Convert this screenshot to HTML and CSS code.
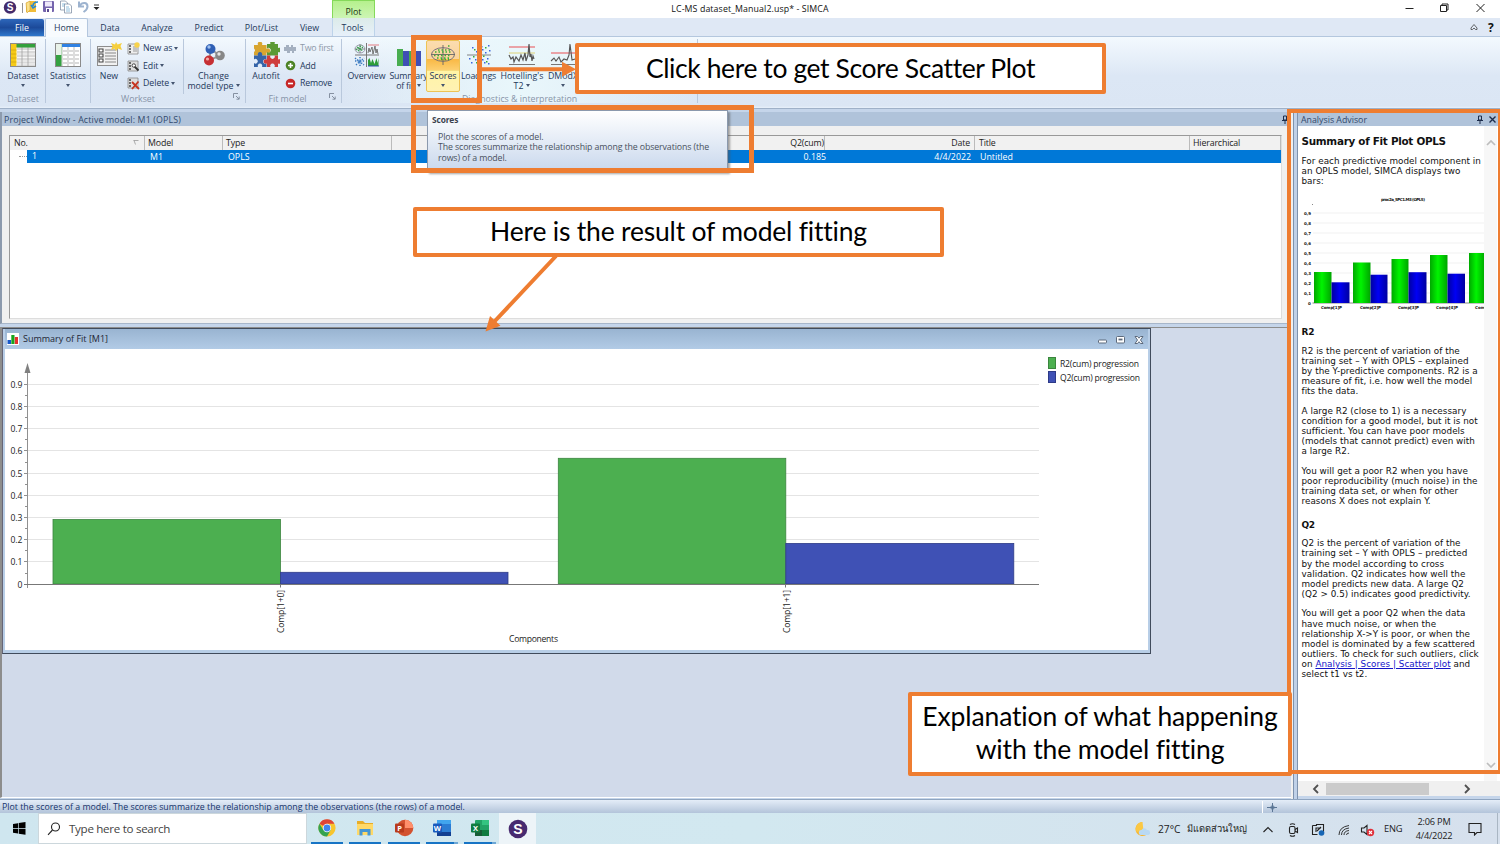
FILE: index.html
```
<!DOCTYPE html>
<html lang="en">
<head>
<meta charset="utf-8">
<title>LC-MS dataset_Manual2.usp* - SIMCA</title>
<link rel="stylesheet" href="styles.css">
</head>
<body>
<header class="titlebar">
  <div class="quick">
    <svg width="104" height="18" viewBox="0 0 104 18">
      <circle cx="10" cy="7.500" r="6.200" fill="#432a6b"/>
      <text x="10" y="11.100" class="s-logo" text-anchor="middle">S</text>
      <path d="M22.500 3v10" stroke="#777" stroke-width=".8"/>
      <path d="M26 3l4-2h6v11H26z" fill="#f1bd3a"/><path d="M26 3l4-2v9l-3 3z" fill="#fbe28c" stroke="#c99525" stroke-width=".5"/>
      <path d="M38 2c-3 0-5 1-5 4M31 5l2 3 3-2" fill="none" stroke="#2389d2" stroke-width="1.600"/>
      <rect x="43" y="1" width="11" height="11" rx="1" fill="#7564ad"/><rect x="45" y="1.500" width="7" height="5" fill="#eee8fa"/><rect x="46" y="8" width="6" height="4" fill="#fff"/><rect x="47" y="9" width="2" height="3" fill="#594890"/>
      <g fill="#fff" stroke="#73849b" stroke-width=".7"><path d="M60.500 1h5l2 2v7h-7z"/><path d="M64.500 4h5l2 2v7h-7z"/></g><path d="M62 4h3M62 6h2M66 7h3M66 9h4M66 11h4" stroke="#62a3cf" stroke-width=".7"/>
      <path d="M79 1.500v5h5M79.500 6C82 2 87.500 2 87.500 6.500c0 3-2 4-4 5.500" fill="none" stroke="#9db3cf" stroke-width="2"/>
      <path d="M94 5h5" stroke="#222" stroke-width=".9"/><path d="M93.500 7h6l-3 3z" fill="#222"/>
    </svg>
  </div>
  <div class="context-tab">Plot</div>
  <div class="window-title">LC-MS dataset_Manual2.usp* - SIMCA</div>
  <svg class="winctl" width="90" height="18" viewBox="1400 0 90 18" fill="none" stroke="#222" stroke-width="1">
    <path d="M1405.500 8.500h8M1440.500 5.500h6v6h-6zM1442 5.500v-1.500h6v6h-1.500M1476.500 4l8 8M1484.500 4l-8 8"/>
  </svg>
</header>

<nav class="tabs">
  <span class="tab file">File</span><span class="tab home">Home</span><span class="tab t-data">Data</span><span class="tab t-ana">Analyze</span><span class="tab t-pre">Predict</span><span class="tab t-plot">Plot/List</span><span class="tab t-view">View</span><span class="tab tools">Tools</span>
  <span class="tab-right"><svg width="8" height="8" viewBox="0 0 8 8" fill="none" stroke="#444" stroke-width=".8"><path d="M1 5l3-3.500L7 5v1.500H5.500L4 5 2.500 6.500H1z"/></svg><b>?</b></span>
</nav>

<section class="ribbon">
  <div class="group g-dataset">
    <div class="items">
      <div class="btn w46">
        <svg width="26" height="26" viewBox="0 0 26 26"><rect x=".5" y="1.500" width="25" height="23" fill="#fff" stroke="#8b8b8b"/><path d="M7 5h18v19H7z" fill="#d9d9d9"/><path d="M1 8.500h24M1 12h24M1 15.500h24M1 19h24M1 22h24" stroke="#fff" stroke-width=".8"/><path d="M12 5v19M18 5v19" stroke="#999" stroke-width=".7"/><rect x="1" y="2" width="24" height="3.500" fill="#32a03c"/><rect x="1" y="2" width="5.500" height="22" fill="#f5ca18"/><path d="M1 8h5.500M1 12h5.500M1 16h5.500M1 20h5.500" stroke="#c69b0a" stroke-width=".6"/></svg>
        <span>Dataset</span><i class="caret"></i>
      </div>
    </div>
    <div class="cap">Dataset</div>
  </div>
  <div class="group g-stat">
    <div class="items">
      <div class="btn w45">
        <svg width="26" height="26" viewBox="0 0 26 26"><rect x=".5" y="1.500" width="25" height="23" fill="#fff" stroke="#8b8b8b"/><path d="M7 5v19M13 5v19M19 5v19" stroke="#aaa" stroke-width=".8"/><path d="M8 9h4M8 13h4M8 17h4M8 21h4M14 9h4M14 13h4M14 17h4M14 21h4M20 9h4M20 13h4M20 17h4M20 21h4" stroke="#b5b5b5"/><rect x="7" y="2" width="18" height="3" fill="#3081e3"/><rect x="1" y="2" width="5.500" height="22" fill="#34a141"/><path d="M1 2h5.500v11H1z" fill="#e9f2e9"/></svg>
        <span>Statistics</span><i class="caret"></i>
      </div>
    </div>
    <div class="cap"></div>
  </div>
  <div class="group g-work">
    <div class="items">
      <div class="btn w36">
        <svg width="26" height="26" viewBox="0 0 26 26"><rect x="1.500" y="4.500" width="20" height="19" fill="#f1f1f1" stroke="#8d8d8d"/><path d="M3 7h4v3H3zM3 12h4v3H3zM3 17h4v3H3z" fill="#fff" stroke="#444" stroke-width="1.100"/><path d="M9 8h11M9 11h11M9 14h11M9 17h11M9 20h11" stroke="#aaa" stroke-width="1.400"/><path d="M15 1l4 1.500L20 0l1.500 2.500L26 1l-1.500 3L26 8l-4-1.500L20 9l-1.500-2.500L15 8l1.500-4z" fill="#f6cf3d"/></svg>
        <span>New</span>
      </div>
      <div class="stack">
        <div class="row"><svg width="13" height="13" viewBox="0 0 13 13"><path d="M1 2h10v10H1z" fill="#eee" stroke="#888" stroke-width=".8"/><path d="M2 4h2M2 7h2M2 10h2" stroke="#444" stroke-width="1.500"/><path d="M6 5h4M6 7h4M6 9h4" stroke="#999"/><circle cx="10" cy="3" r="2.700" fill="#f7d24c"/></svg><span>New as</span><i class="caret"></i></div>
        <div class="row"><svg width="13" height="13" viewBox="0 0 13 13"><path d="M1 2h10v10H1z" fill="#ddd" stroke="#888" stroke-width=".8"/><path d="M2 4h2M2 7h2M2 10h2" stroke="#444" stroke-width="1.500"/><path d="M7 7l4.500 4.500" stroke="#333" stroke-width="1.800"/><circle cx="6.800" cy="6.500" r="1.700" fill="#fff" stroke="#444"/></svg><span>Edit</span><i class="caret"></i></div>
        <div class="row"><svg width="13" height="13" viewBox="0 0 13 13"><path d="M1 1h10v10H1z" fill="#ddd" stroke="#888" stroke-width=".8"/><path d="M2 3h2M2 6h2M2 9h2" stroke="#444" stroke-width="1.500"/><path d="M5 5l7 7M11.500 4.500L5 12" stroke="#c5321d" stroke-width="1.800"/></svg><span>Delete</span><i class="caret"></i></div>
      </div>
      <div class="btn w60 inner-sep">
        <svg width="26" height="26" viewBox="0 0 26 26"><path d="M10 7l9 7-11 4z" stroke="#999" stroke-width="2" fill="none"/><circle cx="9.500" cy="7" r="5" fill="#2f5fb5"/><circle cx="19" cy="13.500" r="4.800" fill="#878787"/><circle cx="8" cy="18.500" r="5" fill="#c62f33"/><circle cx="8" cy="5" r="1.700" fill="#9fc0ef"/><circle cx="18" cy="12" r="1.700" fill="#e5e5e5"/><circle cx="6.500" cy="17" r="1.600" fill="#f3aaa5"/></svg>
        <span>Change</span><span class="l2">model type<i class="caret"></i></span>
      </div>
    </div>
    <div class="cap cap-work">Workset</div>
    <svg class="launch" width="7" height="7" viewBox="0 0 7 7" fill="none" stroke="#7c8797" stroke-width=".9"><path d="M.5 5V.5H5M3 3l3 3M6.200 3.500v2.700H3.500"/></svg>
  </div>
  <div class="group g-fit">
    <div class="items">
      <div class="btn w40">
        <svg width="27" height="26" viewBox="0 0 27 26"><path d="M1 3h4a2.300 2.300 0 1 1 4 0h4.500v4a2.300 2.300 0 1 1 0 3.500v3H1V10a2.300 2.300 0 0 0 0-3.500z" fill="#d8a530"/><path d="M14 2h3.500a2.300 2.300 0 1 1 4 0H25v4a2.300 2.300 0 1 1 0 4v3.500H14V10a2.300 2.300 0 1 0 0-3.500z" fill="#5b9a35"/><path d="M1 13.500h4a2.300 2.300 0 1 1 4 0h4.500v4a2.300 2.300 0 1 0 0 4V25H9a2.300 2.300 0 1 0-4 0H1v-4a2.300 2.300 0 1 0 0-3.500z" fill="#3564a8"/><path d="M14 13.500h3.500a2.300 2.300 0 1 0 4 0H25v4a2.300 2.300 0 1 1 0 4V25h-3.500a2.300 2.300 0 1 0-4 0H14v-3.500a2.300 2.300 0 1 1 0-4z" fill="#cf3d3c"/></svg>
        <span>Autofit</span>
      </div>
      <div class="stack fit">
        <div class="row muted"><svg width="13" height="13" viewBox="0 0 13 13"><path d="M0 5h2V3h3v2h2V3h2v2h3v4h-2v2H8V9H6v2H3V9H0z" fill="#a4b0c0"/></svg><span>Two first</span></div>
        <div class="row"><svg width="11" height="11" viewBox="0 0 11 11"><circle cx="5.500" cy="5.500" r="4.800" fill="#4e8427"/><path d="M3 5.500h5M5.500 3v5" stroke="#fff" stroke-width="1.600"/></svg><span>Add</span></div>
        <div class="row"><svg width="11" height="11" viewBox="0 0 11 11"><circle cx="5.500" cy="5.500" r="4.800" fill="#c62828"/><path d="M3 5.500h5" stroke="#fff" stroke-width="1.600"/></svg><span>Remove</span></div>
      </div>
    </div>
    <div class="cap cap-fit">Fit model</div>
    <svg class="launch" width="7" height="7" viewBox="0 0 7 7" fill="none" stroke="#7c8797" stroke-width=".9"><path d="M.5 5V.5H5M3 3l3 3M6.200 3.500v2.700H3.500"/></svg>
  </div>
  <div class="group g-diag">
    <div class="items">
      <div class="btn w46b">
        <svg width="26" height="26" viewBox="0 0 26 26" fill="none"><path d="M12.500 1v24M1 13h24" stroke="#777"/><ellipse cx="6" cy="7" rx="5" ry="4" stroke="#778" stroke-width=".7"/><path d="M6 2v9M1 7h10" stroke="#666" stroke-width=".7"/><g stroke="#36a24a" stroke-width="1.300" stroke-dasharray="1.300 1.200"><path d="M3 5l6 4M4 9l5-4M2 8l6-5"/></g><path d="M14 3h11" stroke="#e37b80"/><path d="M14 11l1-5 1 4 2-5 1 7 2-8 1 7 1-4 1 5" stroke="#666" stroke-width=".9"/><g stroke="#3a7ac1" stroke-width="1.500" stroke-dasharray="1.300 1.300"><path d="M1 16l9 7M2 23l8-7M6 15v10M1 19h10"/></g><path d="M14 24v-6l1.500-2 1.500 5 1.500-4 2 5 2-6 1 5 1-5v8z" fill="#2d9d38"/><path d="M14 24h11" stroke="#334fb0"/></svg>
        <span>Overview</span>
      </div>
      <div class="btn w38 tight">
        <svg width="26" height="26" viewBox="0 0 26 26"><path d="M1 7h6v17H1zM13 9h6v15h-6z" fill="#48ad50"/><path d="M7 9h6v15H7zM19 9h6v15h-6z" fill="#3f4fb5"/></svg>
        <span>Summary</span><span class="l2">of fit<i class="caret"></i></span>
      </div>
      <div class="btn scores">
        <svg width="26" height="26" viewBox="0 0 26 26" fill="none"><ellipse cx="13" cy="12.500" rx="11.500" ry="6.800" stroke="#667" stroke-width=".9"/><path d="M13 3v20M1 12.500h24" stroke="#666" stroke-width=".9"/><g stroke="#3cae36" stroke-width="1.500" stroke-dasharray="1.500 2"><path d="M5 10h17M4 13.500h17M7 16h13M8 8h12M11 17.500h8M18 4h3"/></g></svg>
        <span>Scores</span><i class="caret"></i>
      </div>
      <div class="btn w38 tight">
        <svg width="26" height="26" viewBox="0 0 26 26" fill="none"><path d="M13 3v20M1 13h24" stroke="#777" stroke-width=".9"/><g fill="#3b66dd"><path d="M6 5h1.500v1.500H6zM10 9h1.500v1.500H10zM16 7h1.500v1.500H16zM22 3h1.500v1.500H22zM19 10h1.500v1.500H19zM3 16h1.500v1.500H3zM5 20h1.500v1.500H5zM9 17h1.500v1.500H9zM16 17h1.500v1.500H16zM21 16h1.500v1.500H21zM18 20h1.500v1.500H18zM22 21h1.500v1.500H22zM15 4h1.500v1.500H15zM23 8h1.500v1.500H23z"/></g><g fill="#36ac3b"><path d="M8 7h1.500v1.500H8zM11 6h1.500v1.500H11zM14 9h1.500v1.500H14zM17 13.500h1.500V15H17zM20 19h1.500v1.500H20zM7 14h1.500v1.500H7zM10 20h1.500v1.500H10zM19 5h1.500v1.500H19z"/></g></svg>
        <span>Loadings</span>
      </div>
      <div class="btn w49">
        <svg width="28" height="26" viewBox="0 0 28 26" fill="none"><path d="M1 5h26" stroke="#ea6a70" stroke-width="1.200"/><path d="M1 11h26" stroke="#dccd68" stroke-width=".9"/><path d="M1 13l2 4 2-2 1 5 2-5 3 4 2-6 2 5 2-7 1 8 2-6 1-11 1 13 1-3 1 7 1-5 1 3" stroke="#555" stroke-width="1.200"/><path d="M1 22.500h26" stroke="#777"/></svg>
        <span>Hotelling's</span><span class="l2">T2<i class="caret"></i></span>
      </div>
      <div class="btn w32">
        <svg width="26" height="26" viewBox="0 0 26 26" fill="none"><path d="M1 11h24" stroke="#ea6a70" stroke-width="1.200"/><path d="M1 19l3-3 2 3 3-4 2 5 3-3 3 1 2-5 1-11 2 16 3-1" stroke="#555" stroke-width="1.100"/><path d="M1 22.500h24" stroke="#777"/></svg>
        <span>DModX</span><i class="caret"></i>
      </div>
    </div>
    <div class="cap cap-diag">Diagnostics &amp; interpretation</div>
  </div>
</section>

<main class="workspace">
  <div class="left">
    <section class="project">
      <div class="pane-title"><span>Project Window - Active model: M1 (OPLS)</span><svg width="6" height="9" viewBox="0 0 6 9" fill="none" stroke="#1c2c4b"><path d="M1.500 1h3v4h-3zM0 5.500h6M3 5.500V9"/></svg></div>
      <div class="table">
        <div class="tr th"><span class="c1">No.<svg width="6" height="5" viewBox="0 0 6 5" fill="none" stroke="#999" stroke-width=".8"><path d="M.5.5h5M1 .5l1.500 4"/></svg></span><span class="c2">Model</span><span class="c3">Type</span><span class="c4">Q2(cum)</span><span class="c5">Date</span><span class="c6">Title</span><span class="c7">Hierarchical</span></div>
        <div class="tr sel"><span class="c1"><i class="dots"></i><b>1</b></span><span class="c2">M1</span><span class="c3">OPLS</span><span class="c4">0.185</span><span class="c5">4/4/2022</span><span class="c6">Untitled</span><span class="c7"></span></div>
      </div>
    </section>
    <section class="mdi">
      <div class="child">
        <div class="child-title">
          <svg width="12" height="12" viewBox="0 0 12 12"><path d="M0 0h12v12H0z" fill="#fff"/><path d="M.5 7H4v4H.5z" fill="#1757c9"/><path d="M4.300 2H7.500v9H4.300z" fill="#18a51e"/><path d="M7.800 4H11v7H7.800z" fill="#e33030"/></svg>
          <span>Summary of Fit [M1]</span>
          <svg class="child-ctl" width="46" height="10" viewBox="0 0 46 10" fill="#fff" stroke="#5d6a7c" stroke-width="1"><rect x=".5" y="5" width="8" height="3" rx=".8"/><rect x="18.500" y="1.500" width="8" height="6.500" rx="1"/><path d="M20.500 4.500h4" stroke-width="1.800"/><path d="M37 1.500h2.500L41 3.200l1.500-1.700H45L42.500 5 45 8.500h-2.500L41 6.700l-1.500 1.800H37L39.500 5z"/></svg>
        </div>
        <svg class="fit-chart" width="1143" height="301" viewBox="5 349 1143 301">
          <path d="M28 384.500H1039M28 406.500H1039M28 428.500H1039M28 450.500H1039M28 473.500H1039M28 495.500H1039M28 517.500H1039M28 539.500H1039M28 561.500H1039" stroke="#e4e4e4" fill="none"/>
          <path d="M27.500 372V588M24 384.500h4M24 406.500h4M24 428.500h4M24 450.500h4M24 473.500h4M24 495.500h4M24 517.500h4M24 539.500h4M24 561.500h4M25 395.500h2M25 417.500h2M25 439.500h2M25 462.500h2M25 484.500h2M25 506.500h2M25 528.500h2M25 550.500h2M25 573.500h2" stroke="#909090" fill="none"/>
          <path d="M27.500 363l3 10h-6z" fill="#808080"/>
          <rect x="53" y="519.500" width="227.500" height="64.500" fill="#4caf50" stroke="#3d8540" stroke-width=".8"/>
          <rect x="280.500" y="572.300" width="227.500" height="11.700" fill="#3f51b5" stroke="#2f3d88" stroke-width=".8"/>
          <rect x="558.300" y="458.300" width="227.500" height="125.700" fill="#4caf50" stroke="#3d8540" stroke-width=".8"/>
          <rect x="785.800" y="543.400" width="228" height="40.600" fill="#3f51b5" stroke="#2f3d88" stroke-width=".8"/>
          <path d="M24 584.500H1039M280.500 584v3.500M785.500 584v3.500" stroke="#777"/>
          <g class="axis" text-anchor="end"><text x="22.500" y="387.700">0.9</text><text x="22.500" y="409.900">0.8</text><text x="22.500" y="432.200">0.7</text><text x="22.500" y="454.300">0.6</text><text x="22.500" y="476.700">0.5</text><text x="22.500" y="498.900">0.4</text><text x="22.500" y="521">0.3</text><text x="22.500" y="543.200">0.2</text><text x="22.500" y="565.400">0.1</text><text x="22.500" y="587.700">0</text></g>
          <g class="axis"><text transform="translate(284 633) rotate(-90)" textLength="43">Comp[1+0]</text><text transform="translate(789.500 633) rotate(-90)" textLength="43">Comp[1+1]</text><text x="509" y="642" textLength="49">Components</text>
          <text x="1060" y="366.700" textLength="79">R2(cum) progression</text><text x="1060" y="381" textLength="80">Q2(cum) progression</text></g>
          <rect x="1048.500" y="357.500" width="7" height="11" fill="#4caf50" stroke="#3a853d"/><rect x="1048.500" y="371.500" width="7" height="11" fill="#3f51b5" stroke="#2d3a87"/>
        </svg>
      </div>
    </section>
  </div>
  <div class="splitter"></div>
  <aside class="advisor">
    <div class="pane-title"><span>Analysis Advisor</span><svg width="20" height="9" viewBox="0 0 20 9" fill="none" stroke="#1c2c4b"><path d="M2.500 1h3v4h-3zM1 5.500h6M4 5.500V9"/><path d="M13.500 1.500l6 6M19.500 1.500l-6 6" stroke-width="1.400"/></svg></div>
    <div class="advisor-body">
      <article>
        <h1>Summary of Fit Plot OPLS</h1>
        <p>For each predictive model component in<br>an OPLS model, SIMCA displays two<br>bars:</p>
        <svg class="mini" width="183" height="124" viewBox="1302 190 183 124">
          <defs><linearGradient id="g"><stop offset="0" stop-color="#00a800"/><stop offset=".45" stop-color="#00f400"/><stop offset="1" stop-color="#00a400"/></linearGradient><linearGradient id="b"><stop offset="0" stop-color="#0000a0"/><stop offset=".45" stop-color="#0000f4"/><stop offset="1" stop-color="#0000a0"/></linearGradient></defs>
          <path d="M1313 213h172M1313 223h172M1313 233h172M1313 243h172M1313 253h172M1313 263h172M1313 273h172M1313 283h172M1313 293h172" stroke="#eee" stroke-width=".8"/>
          <path d="M1312.500 204v1M1312.500 303h172" stroke="#888"/>
          <g fill="url(#g)"><path d="M1314 272h17.500v31H1314z"/><path d="M1353 262.500h17.500V303H1353z"/><path d="M1391.500 259h17v44h-17z"/><path d="M1430 255h17.500v48H1430z"/><path d="M1469 253h16v50h-16z"/></g>
          <g fill="url(#b)"><path d="M1331.500 282.300h18V303h-18z"/><path d="M1370.500 274.700h17V303h-17z"/><path d="M1408.500 272.200h18V303h-18z"/><path d="M1447.500 273.700h17.500V303h-17.500z"/></g>
          <g class="tiny"><text x="1381" y="201" textLength="44">proc2a_SPC1.M3 (OPLS)</text>
          <text x="1304" y="215">0,9</text><text x="1304" y="225">0,8</text><text x="1304" y="235">0,7</text><text x="1304" y="245">0,6</text><text x="1304" y="255">0,5</text><text x="1304" y="265">0,4</text><text x="1304" y="275">0,3</text><text x="1304" y="285">0,2</text><text x="1304" y="295">0,1</text><text x="1308" y="304.500">0</text>
          <text x="1321" y="309" textLength="21">Comp[1]P</text><text x="1360" y="309" textLength="21">Comp[2]P</text><text x="1398" y="309" textLength="21">Comp[3]P</text><text x="1436" y="309" textLength="22">Comp[4]P</text><text x="1475" y="309" textLength="10">Com</text></g>
        </svg>
        <h2>R2</h2>
        <p>R2 is the percent of variation of the<br>training set – Y with OPLS – explained<br>by the Y-predictive components. R2 is a<br>measure of fit, i.e. how well the model<br>fits the data.</p>
        <p>A large R2 (close to 1) is a necessary<br>condition for a good model, but it is not<br>sufficient. You can have poor models<br>(models that cannot predict) even with<br>a large R2.</p>
        <p>You will get a poor R2 when you have<br>poor reproducibility (much noise) in the<br>training data set, or when for other<br>reasons X does not explain Y.</p>
        <h2 class="q2">Q2</h2>
        <p>Q2 is the percent of variation of the<br>training set – Y with OPLS – predicted<br>by the model according to cross<br>validation. Q2 indicates how well the<br>model predicts new data. A large Q2<br>(Q2 &gt; 0.5) indicates good predictivity.</p>
        <p>You will get a poor Q2 when the data<br>have much noise, or when the<br>relationship X-&gt;Y is poor, or when the<br>model is dominated by a few scattered<br>outliers. To check for such outliers, click<br>on <a>Analysis | Scores | Scatter plot</a> and<br>select t1 vs t2.</p>
      </article>
      <div class="vscroll"><svg width="10" height="6" viewBox="0 0 10 6" fill="none" stroke="#bdbdbd" stroke-width="1.700"><path d="M1 5l4-4 4 4"/></svg><svg width="10" height="6" viewBox="0 0 10 6" fill="none" stroke="#bdbdbd" stroke-width="1.700"><path d="M1 1l4 4 4-4"/></svg></div>
    </div>
    <div class="hscroll"><svg width="7" height="10" viewBox="0 0 7 10" fill="none" stroke="#505050" stroke-width="1.800"><path d="M6 1L2 5l4 4"/></svg><i></i><svg width="7" height="10" viewBox="0 0 7 10" fill="none" stroke="#505050" stroke-width="1.800"><path d="M1 1l4 4-4 4"/></svg></div>
  </aside>
</main>

<div class="status"><span>Plot the scores of a model. The scores summarize the relationship among the observations (the rows) of a model.</span><svg width="16" height="14" viewBox="0 0 16 14" fill="none"><path d="M.5 1v12" stroke="#fff"/><path d="M5 7.500h10M10.500 3v9" stroke="#5b7695"/><circle cx="10.500" cy="7.500" r="1.700" stroke="#5b7695"/></svg></div>

<footer class="taskbar">
  <div class="start"><svg width="13" height="13" viewBox="0 0 13 13"><path d="M0 2l5-.8V6H0zM5.700 1L12.500 0v6H5.700zM0 6.700h5v4.800l-5-.8zM5.700 6.700h6.800v6l-6.800-1z"/></svg></div>
  <div class="search"><svg width="14" height="14" viewBox="0 0 14 14" fill="none" stroke="#222" stroke-width="1.100"><circle cx="8.500" cy="5" r="4"/><path d="M5.500 8L1 12.800"/></svg><span>Type here to search</span></div>
  <div class="app"><svg width="18" height="18" viewBox="0 0 18 18"><circle cx="9" cy="9" r="8.600" fill="#f7c52d"/><path d="M9 9L1.500 4.700A8.600 8.600 0 0 1 16.500 4.700H9z" fill="#e04436"/><path d="M1.500 4.700A8.600 8.600 0 0 0 9 17.600L12.700 11 9 9 5 10.500z" fill="#34a351"/><circle cx="9" cy="9" r="4.200" fill="#fff"/><circle cx="9" cy="9" r="3.400" fill="#4285ed"/></svg></div>
  <div class="app"><svg width="18" height="18" viewBox="0 0 18 18"><path d="M1 2h6l2 2h8v12H1z" fill="#e8ad28"/><path d="M1 5h16v11H1z" fill="#ffd968"/><path d="M3.500 10h11v6.500h-3V13h-5v3.500h-3z" fill="#4596d4"/></svg></div>
  <div class="app"><svg width="20" height="18" viewBox="0 0 20 18"><circle cx="11" cy="9" r="8.300" fill="#d35230"/><path d="M11 .7A8.300 8.300 0 0 1 19.300 9H11z" fill="#ff8f6b"/><rect x="1" y="4.500" width="9" height="9" rx="1" fill="#b83b1d"/><text x="5.500" y="11.700" text-anchor="middle" class="office">P</text></svg></div>
  <div class="app multi"><svg width="20" height="18" viewBox="0 0 20 18"><rect x="5" y="1" width="14" height="16" rx="1" fill="#2b7cd3"/><path d="M5 1h14v4H5z" fill="#41a5ee"/><path d="M5 13h14v4H5z" fill="#123f91"/><rect x="1" y="4.500" width="9" height="9" rx="1" fill="#185abd"/><text x="5.500" y="11.700" text-anchor="middle" class="office">W</text></svg></div>
  <div class="app multi"><svg width="20" height="18" viewBox="0 0 20 18"><rect x="5" y="1" width="14" height="16" rx="1" fill="#21a366"/><path d="M12 1h7v5h-7z" fill="#33c481"/><path d="M5 11h14v6H5z" fill="#185c37"/><path d="M12 11h7v6h-7z" fill="#107c41"/><rect x="1" y="4.500" width="9" height="9" rx="1" fill="#107c41"/><text x="5.500" y="11.700" text-anchor="middle" class="office">X</text></svg></div>
  <div class="app active"><svg width="20" height="20" viewBox="0 0 20 20"><circle cx="10" cy="10" r="9.300" fill="#472a70"/><text x="10" y="15" text-anchor="middle" class="s-big">S</text></svg></div>
  <div class="tray">
    <svg class="moon" width="17" height="16" viewBox="0 0 17 16"><path d="M8.500 1a7 7 0 1 0 6.500 9.500A6 6 0 0 1 8.500 1z" fill="#f9b62f"/><path d="M8.500 1a7 7 0 0 0-6 10l7-1z" fill="#fbc844"/><path d="M7 14a2.500 2.500 0 0 1 .5-5 3 3 0 0 1 5.500 0 2.500 2.500 0 0 1 1 5z" fill="#b9d9f3"/></svg>
    <span class="temp">27°C</span><span class="thai">มีแดดส่วนใหญ่</span>
    <svg class="tray-icons" width="120" height="20" viewBox="1260 818 120 20" fill="none" stroke="#222" stroke-width="1.100"><path d="M1263.500 831l4.500-4.500 4.500 4.500"/><rect x="1289.500" y="825.500" width="5.500" height="7" rx="1.500"/><path d="M1295 828.500l2.500-1.500v4.500l-2.500-1.500M1290 823.500q2.500-1.500 5 0M1290 834.500q2.500 1.500 5 0"/><path d="M1312.500 824.500h4v-1h7v9M1312.500 824.500v9h5M1316 831v-4h5M1317 830l4-4"/><circle cx="1321.500" cy="832" r="2.800" fill="#1766b5" stroke="none"/><g stroke-width=".9"><path d="M1339 834q0-8 10-9.500M1341.500 834q0-6 7.500-7M1344 834q0-4 5-4.500M1346.500 834q0-2 2.500-2"/></g><path d="M1361.500 827h2.500l3-2.500v9l-3-2.500h-2.500z"/><circle cx="1370.500" cy="831.500" r="3.700" fill="#e0303a" stroke="none"/><path d="M1369 830l3 3M1372 830l-3 3" stroke="#fff"/></svg>
    <span class="eng">ENG</span>
    <span class="clock">2:06 PM<br>4/4/2022</span>
    <svg class="note" width="14" height="14" viewBox="0 0 14 14" fill="none" stroke="#222" stroke-width="1.100"><path d="M1 1.500h12v9H9L6.500 13v-2.500H1z"/></svg>
  </div>
</footer>

<div class="tooltip"><b>Scores</b><p>Plot the scores of a model.<br>The scores summarize the relationship among the observations (the<br>rows) of a model.</p></div>
<div class="frame f-scores"></div>
<div class="frame f-tip"></div>
<div class="frame f-advisor"></div>
<div class="callout k-click"><span>Click here to get Score Scatter Plot</span></div>
<div class="callout k-result"><span>Here is the result of model fitting</span></div>
<div class="callout k-explain"><span>Explanation of what happening</span><span>with the model fitting</span></div>
<svg class="arrows" width="1500" height="844" viewBox="0 0 1500 844"><g stroke="#ee7d31" stroke-width="4"><path d="M481 69.200h82M556 256l-62 66"/></g><path d="M576 69.200l-14 7.500v-15zM485.500 331.500l4.500-15.500 10.500 9.800z" fill="#ee7d31"/></svg>
</body>
</html>
```
FILE: styles.css
```
* { box-sizing: border-box; }
body { margin: 0; width: 1500px; height: 844px; overflow: hidden; position: relative; display: flex; flex-direction: column; background: #fff; color: #1e395b; font: 8.8px/10px "Open Sans", "Noto Sans", sans-serif; white-space: nowrap; }
svg { display: block; flex: none; }
i { font-style: normal; }

.titlebar { height: 18px; display: flex; color: #111; }
.quick { width: 332px; }
.context-tab { width: 43px; border: 1px solid #85d95a; border-bottom: 0; background: linear-gradient(#b5f08d, #cdf5b4); text-align: center; line-height: 22px; color: #1d3314; }
.window-title { width: 750px; text-align: center; line-height: 19px; letter-spacing: .1px; }
.winctl { margin-left: 275px; }
.s-logo { font: bold 10px "Liberation Sans", sans-serif; fill: #fff; }

.tabs { height: 19px; display: flex; background: #dfe8f5; border-bottom: 1px solid #b4c7de; line-height: 21px; }
.tab { text-align: center; }
.file { width: 44px; background: linear-gradient(#2d66ba, #1c4a9a 50%, #2f77cb); color: #fff; height: 17px; margin-top: 1px; line-height: 18px; border-radius: 2px 2px 0 0; }
.home { width: 43px; margin-left: 1px; height: 19px; background: #f8fbfe; border: 1px solid #b4c7de; border-bottom: 0; border-radius: 2px 2px 0 0; line-height: 19px; }
.t-data { width: 44px; } .t-ana { width: 50px; } .t-pre { width: 54px; } .t-plot { width: 51px; } .t-view { width: 45px; }
.tools { width: 43px; border: solid #bdd3ea; border-width: 0 1px; background: linear-gradient(#dcebe9, #e7f0fa); text-indent: -2px; }
.tab-right { margin-left: auto; width: 30px; display: flex; align-items: center; gap: 10px; color: #111; }
.tab-right b { font-size: 12px; }

.ribbon { height: 71px; display: flex; background: linear-gradient(#f3f9fe, #dce7f5 55%, #dbe6f4 97%, #e8f0fa); }
.group { height: 64px; margin-top: 2px; border-right: 1px solid #b9c8dc; display: grid; grid-template-rows: 55px 9px; position: relative; }
.g-dataset { width: 46px; } .g-stat { width: 45px; } .g-work { width: 155px; } .g-fit { width: 96px; }
.g-diag { width: 356px; background: linear-gradient(90deg, #eef6fc00, #e9f7fb 50%, #eef6fc00); }
.items { display: flex; }
.btn { display: flex; flex-direction: column; align-items: center; padding-top: 3px; flex: none; }
.btn > svg { margin-bottom: 3px; }
.btn > span { line-height: 10px; }
.btn > .caret { margin: 3px 0 0; }
.l2 .caret { margin: 0 0 2px 3px; }
.caret { display: inline-block; border: solid transparent; border-width: 3px 2.500px 0; border-top-color: #44546f; }
.w46 { width: 46px; } .w45 { width: 44px; } .w36 { width: 36px; } .w60 { width: 60px; } .w40 { width: 40px; }
.w60 .caret { margin-left: 2px; }
.w46b { width: 47px; margin-left: 1px; } .w38 { width: 37px; } .w49 { width: 50px; } .w32 { width: 32px; }
.tight { letter-spacing: -.2px; }
.inner-sep { border-left: 1px solid #b9c8dc; margin-left: 1px; }
.stack { width: 55px; display: grid; grid-template-rows: repeat(3, 17.500px); padding-top: .5px; }
.row { display: flex; align-items: center; gap: 3px; letter-spacing: -.05px; }
.row .caret { margin-left: -1px; }
.fit { margin-left: -3px; }
.fit .row { gap: 2px; letter-spacing: -.2px; } .fit .row svg { margin: 0 auto; } .fit .row span { width: 38px; }
.muted { color: #8e99a8; }
.cap { text-align: center; color: #8794a8; }
.cap-work { padding-right: 60px; } .cap-fit { padding-right: 12px; }
.launch { position: absolute; right: 5px; bottom: 3px; }
.scores { width: 34px; height: 52px; margin: 1px 0 0 -1px; padding-top: 1px; border: 1px solid #edc355; border-radius: 2px; background: linear-gradient(#fbdcb0, #fbd49a 36%, #f9b946 37%, #fdcf70 58%, #edc355 58%, #fff4a6 60%, #fff2b3); }
.scores > svg { margin-bottom: 3px; }

.workspace { height: 691px; display: flex; background: #c5d5ea; border-top: 1px solid #9fb1c8; padding-top: 3px; }
.left { width: 1291px; }
.pane-title { height: 14px; display: flex; justify-content: space-between; align-items: center; background: #b0c3da; color: #31496c; padding-top: 1px; }
.project { height: 212px; background: #f0f0f0; border-left: 2px solid #8c9aad; border-bottom: 1px solid #a7b6ca; }
.project .pane-title { padding-left: 2px; padding-right: 3px; }
.project .pane-title span { letter-spacing: .15px; }
.table { margin: 9px 0 0 7px; width: 1273px; height: 184px; background: #fff; border: 1px solid #999; border-color: #999 #ddd #ddd #999; color: #222; }
.tr { display: flex; height: 13.500px; line-height: 14px; }
.th { background: #f1f1f1; letter-spacing: -.15px; }
.tr span { padding: 0 3px; }
.th span { border-right: 1px solid #bbb; }
.tr .c1 { width: 135px; display: flex; align-items: center; justify-content: space-between; padding: 0 5px 0 4px; }
.c2 { width: 78px; } .c3 { width: 169px; } .tr .c4 { width: 433px; text-align: right; padding-right: 0; } .tr .c5 { width: 150px; text-align: right; padding-right: 4px; } .tr .c6 { width: 215px; padding-left: 4px; } .c7 { width: 91px; }
.sel { color: #fff; background: linear-gradient(90deg, #fff 17px, #0078d7 17px); }
.tr.sel .c2, .tr.sel .c3 { padding-left: 5px; }
.tr.sel .c1 { padding-left: 9px; justify-content: flex-start; gap: 5px; } .sel b { font-weight: 400; }
.tr.sel .c4 { padding-right: 0; transform: translateX(1px); }
.tr.sel .c6 { padding-left: 5px; }
.dots { width: 8px; border-top: 1px dotted #999; }
.mdi { margin-top: 3px; height: 471px; background: #d1daea; border: solid #8d8d8d; border-width: 1px 0 0 2px; border-bottom: 1px solid #fff; }
.child { width: 1149px; height: 326px; border: 1px solid #404b5c; border-left-color: #667; background: #b8cee7; padding: 0 2px 3px; }
.child-title { height: 20px; background: linear-gradient(#99b4d1, #b2cbe6); display: flex; align-items: center; gap: 4px; padding-left: 2px; color: #1d2534; font-size: 9px; }
.child-ctl { margin: 2px 4.500px 0 auto; }
.fit-chart { background: #fff; }
.axis { font: 8.600px "Open Sans", "Noto Sans", sans-serif; fill: #222; }
.splitter { width: 7px; background: linear-gradient(90deg, #f0f0f0 2px, #7e92ad 2px 3px, #c0d1e8 3px 6px, #7e92ad 6px); }
.advisor { width: 202px; }
.advisor .pane-title { padding: 1px 4px 0 3px; }
.advisor-body { height: 655px; display: flex; background: #fff; }
article { width: 186px; padding: 9px 0 0 3.500px; color: #111; font: 8.800px/10.150px "DejaVu Sans", sans-serif; letter-spacing: .04px; }
h1 { font: bold 10.400px/12px "DejaVu Sans", sans-serif; letter-spacing: -.28px; margin: 0 0 9px; }
h2 { font: bold 9px/10.150px "DejaVu Sans", sans-serif; margin: 12.500px 0 9px; letter-spacing: -.3px; }
.q2 { margin: 13.700px 0 8px; }
article p { margin: 0 0 9.200px; }
article .mini { margin: -5.500px 0 0; }
a { color: #1414c8; text-decoration: underline; }
.tiny { font: bold 4px "DejaVu Sans", sans-serif; letter-spacing: 0; fill: #111; }
.vscroll { width: 13px; background: #f7f7f7; display: flex; flex-direction: column; justify-content: space-between; align-items: center; padding: 14px 0 13px; }
.hscroll { height: 15px; background: #f0f0f0; display: flex; align-items: center; padding: 0 29px 0 14px; }
.hscroll i { width: 103px; height: 12px; background: #cbcbcb; margin: 0 auto 0 7px; }

.status { height: 14px; padding-left: 2px; display: flex; align-items: center; background: linear-gradient(#e4edf8, #b3c4da); color: #16346c; border-top: 1px solid #8fa5c0; }
.status svg { margin-left: auto; margin-right: 222px; }

.taskbar { height: 31px; display: flex; background: linear-gradient(90deg, #cfe6ef, #d2e8f0 50%, #d6e0ed); color: #222; }
.start { width: 38px; display: grid; place-items: center; }
.search { width: 269px; background: #fff; border: 1px solid #ccd7dc; display: flex; align-items: center; gap: 8px; padding-left: 8px; font-size: 11.600px; color: #444; letter-spacing: -.3px; margin-right: 1px; }
.app { width: 32px; margin-left: 3px; margin-right: 3.300px; border-bottom: 2px solid #1774c5; display: grid; place-items: center; }
.active { width: 37px; margin: 0; border: 0; background: #edf4f8; }
.multi { border-image: linear-gradient(90deg, #1774c5 85%, #6da7d5 85%) 1; border-width: 0 0 2px; }
.office { font: bold 7.500px "Open Sans", sans-serif; fill: #fff; }
.s-big { font: bold 14px "Liberation Sans", sans-serif; fill: #fff; }
.tray { margin-left: auto; width: 366px; display: flex; align-items: center; font-size: 10.200px; border-right: 1px solid #a9b6c3; margin-right: 2px; }
.moon { margin-left: 2px; }
.temp { margin-left: 7px; width: 29px; } .thai { width: 66px; font-size: 9.300px; } .tray-icons { margin-left: 7px; }
.eng { margin-left: 4px; width: 28px; font-size: 9.300px; letter-spacing: -.2px; }
.clock { width: 44px; text-align: center; font-size: 9.200px; line-height: 14px; letter-spacing: -.2px; }
.note { margin-left: 12px; }

.tooltip { position: absolute; left: 427px; top: 110px; width: 301px; height: 62px; padding: 4px; background: linear-gradient(#fff, #c9d8ed); border: 1px solid #8b99ad; box-shadow: 2px 2px 2px #5558; color: #4a5260; }
.tooltip b { font-size: 8.300px; color: #3a414d; display: block; letter-spacing: -.1px; }
.tooltip p { margin: 7px 0 0 6px; line-height: 10.300px; letter-spacing: -.12px; }
.frame { position: absolute; border: 4.500px solid #ee7d31; }
.f-scores { left: 411px; top: 35px; width: 71px; height: 68px; border-width: 5px; }
.f-tip { left: 411px; top: 105px; width: 343px; height: 68px; border-width: 5px; }
.f-advisor { left: 1287px; top: 109px; width: 215px; height: 665px; }
.callout { position: absolute; display: flex; flex-direction: column; justify-content: center; align-items: center; background: #fff; border: 4px solid #ee7d31; border-radius: 2px; color: #000; font: 26.500px/33px Lato, "Open Sans", sans-serif; padding-bottom: 1px; }
.k-click { left: 575px; top: 43px; width: 531px; height: 51px; letter-spacing: -.4px; }
.k-result { left: 413px; top: 207px; width: 531px; height: 50px; padding-bottom: 2px; letter-spacing: -.2px; }
.k-explain { left: 908px; top: 692px; width: 384px; height: 84px; padding-bottom: 2px; letter-spacing: -.13px; }
.arrows { position: absolute; left: 0; top: 0; }
```
